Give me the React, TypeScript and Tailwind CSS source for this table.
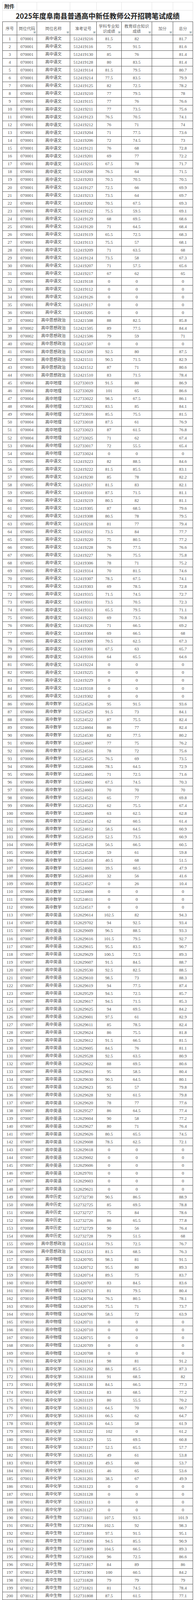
import React from 'react';

type Group = { code: string; name: string; rows: string[] };

// each row: 准考证号 学科成绩 教育成绩 总分
const groups: Group[] = [
    {
        code: '070001', name: '高中语文', rows: [
            '512419216 81.5 82 81.7', '512419116 75 91.5 81.6', '512419130 85 76 81.4', '512419128 80 83.5 81.4',
            '512419114 81.5 79.5 80.7', '512419214 77.5 83.5 79.9', '512419125 82 72.5 78.2', '512419210 77 79.5 78',
            '512419115 77 76 76.6', '512419211 77 73.5 75.6', '512419123 76.5 70.5 74.1', '512419212 76 71 74',
            '512419204 71 77.5 73.6', '512419206 72 74.5 73', '512419121 76 68 72.8', '512419201 69 77 72.2',
            '512419215 67.5 78 71.7', '512419208 76.5 64 71.5', '512419203 70.5 70.5 70.5', '512419127 72.5 66 69.9',
            '512419213 73.5 64 69.7', '512419202 70.5 67.5 69.3', '512419122 75.5 59.5 69.1', '512419129 68 69.5 68.6',
            '512419120 71 64.5 68.4', '512419119 65.5 72.5 68.3', '512419113 75.5 57 68.1', '512419209 71 63.5 68',
            '512419124 73.5 58 67.3', '512419207 71 57.5 65.6', '512419217 67 62 65', '512419118 0 0 0',
            '512419112 0 0 0', '512419126 0 0 0', '512419117 0 0 0', '512419205 0 0 0',
        ],
    },
    {
        code: '070002', name: '高中思想政治', rows: [
            '512421508 88 82.5 85.8', '512421505 89 77.5 84.4', '512421506 79 59 71', '512421507 0 0 0',
        ],
    },
    {
        code: '070003', name: '高中思想政治', rows: [
            '512421509 92.5 80 87.5', '512421511 90.5 71.5 82.9', '512421512 87 71 80.6', '512421510 83 71.5 78.4',
        ],
    },
    {
        code: '070004', name: '高中地理', rows: [
            '512733019 91.5 80 86.9', '512733020 101 65 86.6', '512733022 98.5 67.5 86.1', '512733021 83.5 85 84.1',
            '512733016 85.5 75.5 81.5', '512733018 87.5 61 76.9', '512733023 87 61.5 76.8', '512733025 71 62 67.4',
            '512733017 72 55.5 65.4', '512733024 0 0 0',
        ],
    },
    {
        code: '070005', name: '高中语文', rows: [
            '512419223 82 88.5 84.6', '512419222 81.5 85.5 83.1', '512419230 85 78 82.2', '512419317 81.5 83 82.1',
            '512419310 87.5 71.5 81.1', '512419219 80.5 82 81.1', '512419305 87 68.5 79.6', '512419308 80.5 78 79.5',
            '512419218 81 77 79.4', '512419312 73.5 84 77.7', '512419220 75 80.5 77.2', '512419228 76 77.5 76.6',
            '512419227 76 75.5 75.8', '512419306 78 71 75.2', '512419314 70 81.5 74.6', '512419307 78.5 67.5 74.1',
            '512419303 69 78.5 72.8', '512419315 71.5 74.5 72.7', '512419311 73.5 70.5 72.3', '512419313 65.5 79.5 71.1',
            '512419221 69 73.5 70.8', '512419226 71 66.5 69.2', '512419304 69 66.5 68', '512419309 70.5 62.5 67.3',
            '512419301 67.5 63 65.7', '512419316 64 65.5 64.6', '512419224 0 0 0', '512419225 0 0 0',
            '512419229 0 0 0', '512419318 0 0 0', '512419302 0 0 0',
        ],
    },
    {
        code: '070006', name: '高中数学', rows: [
            '512524526 95 91.5 93.6', '512524529 91.5 73 84.1', '512524522 87 75.5 82.4', '512524604 86 77 82.4',
            '512524530 82 77.5 80.2', '512524607 77 75 76.2', '512524516 78 72 75.6', '512524525 76.5 69 73.5',
            '512524606 78.5 64.5 72.9', '512524605 71 72.5 71.6', '512524602 67.5 74.5 70.3', '512524603 70 70 70',
            '512524521 65 77 69.8', '512524523 62 75.5 67.4', '512524609 63 62.5 62.8', '512524524 62 60.5 61.4',
            '512524612 58.5 64.5 60.9', '512524519 52.5 73.5 60.9', '512524528 56.5 66.5 60.5', '512524520 59 61 59.8',
            '512524518 40.5 68 51.5', '512524601 39.5 60.5 47.9', '512524610 32 56 41.6', '512524527 0 26 10.4',
            '512524608 0 0 0', '512524611 0 0 0', '512524517 0 0 0',
        ],
    },
    {
        code: '070007', name: '高中英语', rows: [
            '512629614 102.5 82 94.3', '512629702 94 92.5 93.4', '512629609 96.5 88.5 93.3', '512629616 101.5 79.5 92.7',
            '512629615 95.5 83.5 90.7', '512629629 100.5 72.5 89.3', '512629607 91.5 84.5 88.7', '512629530 92.5 82.5 88.5',
            '512629610 98.5 73 88.3', '512629619 94 77.5 87.4', '512629529 94.5 72.5 85.7', '512629617 94.5 71.5 85.3',
            '512629625 94 69.5 84.2', '512629601 97.5 61 82.9', '512629611 85 78.5 82.4', '512629624 86 75.5 81.8',
            '512629612 91.5 66.5 81.5', '512629605 84.5 76 81.1', '512629528 92.5 63.5 80.9', '512629622 88 69.5 80.6',
            '512629613 95 58.5 80.4', '512629630 90.5 64.5 80.1', '512629623 95 57 79.8', '512629628 92 61.5 79.8',
            '512629620 78 77 77.6', '512629527 86 64.5 77.4', '512629604 90 58 77.2', '512629627 80 71 76.4',
            '512629626 80.5 65.5 74.5', '512629608 78.5 62.5 72.1', '512629618 0 0 0', '512629602 0 0 0',
            '512629606 0 0 0', '512629701 0 0 0', '512629603 0 0 0', '512629621 0 0 0',
        ],
    },
    {
        code: '070008', name: '高中历史', rows: [
            '512732730 90.5 86.5 88.9', '512732725 85 69.5 78.8', '512732727 75 84 78.6', '512732726 86 65.5 77.8',
            '512732729 90 56 76.4', '512732728 79 51.5 68',
        ],
    },
    {
        code: '070009', name: '高中思想政治', rows: ['512421514 79.5 72.5 76.7', '512421513 81.5 68.5 76.3'],
    },
    {
        code: '070010', name: '高中物理', rows: [
            '512420705 98.5 81 91.5', '512420712 95.5 80 89.3', '512420714 89.5 75 83.7', '512420707 83 84.5 83.6',
            '512420713 81 79.5 80.4', '512420704 76.5 80.5 78.1', '512420716 75.5 71 73.7', '512420706 58.5 72 63.9',
            '512420711 0 0 0', '512420710 0 0 0', '512420715 0 0 0', '512420709 0 0 0', '512420708 0 0 0',
        ],
    },
    {
        code: '070011', name: '高中化学', rows: [
            '512631114 98 81 91.2', '512631202 88.5 85.5 87.3', '512631118 91 68.5 82', '512631130 84.5 66.5 77.3',
            '512631124 83 68.5 77.2', '512631119 80 55.5 70.2', '512631121 64.5 70 66.7', '512631116 66.5 62 64.7',
            '512631126 64.5 58 61.9', '512631122 102 0 61.2', '512631129 55 69.5 60.8', '512631117 52.5 65.5 57.7',
            '512631125 49 61 53.8', '512631120 49.5 60 53.7', '512631115 46 65 53.6', '512631201 38.5 67 49.9',
            '512631123 0 0 0', '512631128 0 0 0', '512631113 0 0 0', '512631127 0 0 0',
        ],
    },
    {
        code: '070012', name: '高中生物', rows: [
            '512731811 107.5 93.5 101.9', '512731904 102.5 92 98.3', '512731810 97.5 91.5 95.1', '512731830 94.5 85.5 90.9',
            '512731809 104.5 66.5 89.3', '512731820 96 72.5 86.6', '512731817 84 89 86', '512731903 100 60.5 84.2',
            '512731828 79 79 79', '512731821 81 74.5 78.4', '512731808 87.5 61.5 77.1', '512731905 82 69.5 77',
            '512731824 82 61.5 73.8', '512731825 68 76.5 71.4', '512731826 75.5 64.5 71.1', '512731906 73 64 69.4',
            '512731822 63.5 69 65.7', '512731901 66.5 64 65.5', '512731902 64.5 65.5 64.9', '512731818 72.5 51.5 64.1',
            '512731813 57 74.5 64', '512731827 60 68 63.2', '512731819 62 62.5 62.2', '512731829 63 60 61.8',
            '512731816 48.5 70 57.1', '512731812 0 0 0', '512731823 0 0 0', '512731815 0 0 0', '512731814 0 0 0',
        ],
    },
    {
        code: '070013', name: '高中地理', rows: [
            '512733030 86 93 88.8', '512733102 90 77.5 85', '512733027 89.5 74 83.3', '512733026 86.5 75 81.9',
            '512733101 90.5 57 77.1', '512733028 69.5 83 74.9', '512733029 71 0 42.6',
        ],
    },
];

const rows = groups.flatMap((g) =>
    g.rows.map((r) => {
        const [ticket, a, b, total] = r.split(' ');
        return { code: g.code, name: g.name, ticket, a, b, total };
    })
);

const cols = 'grid grid-cols-[37px_51px_85px_68px_64px_78px_54px_51px]';

const FilterButton = () => (
    <span className="absolute right-[2px] bottom-[3px] w-[6px] h-[6px] border border-[#c4c4c4] bg-[#f2f2f2] flex items-center justify-center">
        <span className="w-0 h-0 border-x-[2px] border-x-transparent border-t-[2px] border-t-[#2d6b78]" />
    </span>
);

const headCell = 'relative flex items-center justify-center text-center border-r border-[#4d4d4d] text-[#6a6a6a] text-[10.5px] leading-[13px]';
const cell = 'flex items-center justify-center border-r border-[#4d4d4d] leading-none';

const App: React.FC = () => {
    return (
        <div className="bg-white w-[500px] h-[4604px] pt-[5px] pl-[6px] font-['Liberation_Serif','Noto_Sans_CJK_SC',serif] text-[#505050]">
            <div className="w-[489px]">
                {/* sheet gridline row */}
                <div className={`${cols} h-[20px] border-t border-l border-[#e2e2e2]`}>
                    <div className="flex items-center pl-[4px] border-r border-b border-[#e2e2e2] text-[13px] font-bold text-[#333] font-['Noto_Sans_CJK_SC',sans-serif]">附件</div>
                    {[0, 1, 2, 3, 4, 5, 6].map((i) => (
                        <div key={i} className="border-r border-b border-[#e2e2e2]" />
                    ))}
                </div>
                <div className="h-[30px] flex items-center justify-center border-x border-[#e2e2e2] text-[18px] font-bold text-[#222] font-['Noto_Sans_CJK_SC',sans-serif]">
                    2025年度阜南县普通高中新任教师公开招聘笔试成绩
                </div>

                <div className="border-l border-t border-[#4d4d4d]">
                    <div className={`${cols} h-[34px] border-b border-[#4d4d4d] font-['Noto_Sans_CJK_SC',sans-serif]`}>
                        <div className={headCell}>序号</div>
                        <div className={headCell}>岗位代码<FilterButton /></div>
                        <div className={headCell}>岗位名称<FilterButton /></div>
                        <div className={headCell}>准考证号<FilterButton /></div>
                        <div className={headCell}>学科专业知<br />识成绩<FilterButton /></div>
                        <div className={headCell}>教育综合知识<br />成绩<FilterButton /></div>
                        <div className={headCell}>加分<FilterButton /></div>
                        <div className={headCell}>总分<FilterButton /></div>
                    </div>
                    {rows.map((r, i) => (
                        <div key={i} className={`${cols} h-[20.04px] border-b border-[#4d4d4d] text-[11.2px]`}>
                            <div className={cell}>{i + 1}</div>
                            <div className={cell}>{r.code}</div>
                            <div className={`${cell} text-[10.5px]`}>{r.name}</div>
                            <div className={cell}>{r.ticket}</div>
                            <div className={cell}>{r.a}</div>
                            <div className={cell}>{r.b}</div>
                            <div className={cell}></div>
                            <div className={cell}>{r.total}</div>
                        </div>
                    ))}
                </div>
            </div>
        </div>
    );
};

export default App;
